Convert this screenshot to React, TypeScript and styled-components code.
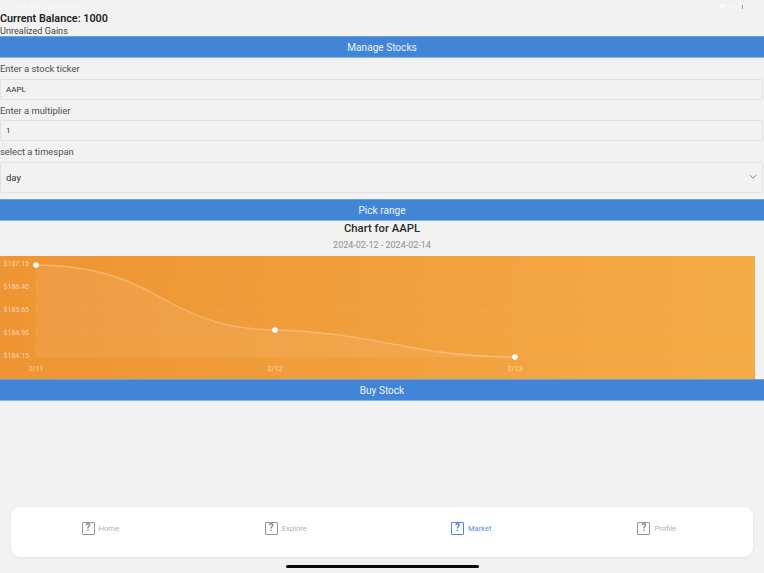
import React from 'react';
import styled, {createGlobalStyle} from 'styled-components';

const GlobalStyle = createGlobalStyle`
  html, body {
    margin: 0;
    padding: 0;
    background: #f2f2f2;
    font-family: Roboto, "Liberation Sans", sans-serif;
  }
  * {
    box-sizing: border-box;
  }
`;

const Page = styled.div`
  width: 764px;
  height: 573px;
  overflow: hidden;
  display: flex;
  flex-direction: column;
  background: #f2f2f2;
`;

const StatusBar = styled.div`
  height: 13px;
  flex-shrink: 0;
  padding: 1px 21px 0 10px;
  display: flex;
  justify-content: space-between;
  align-items: center;
  color: #ffffff;
  font-size: 7px;
  opacity: 0.7;
`;

const StatusIcons = styled.div`
  display: flex;
  align-items: center;
  gap: 3px;
`;

const BatteryLevel = styled.span`
  width: 1px;
  height: 4px;
  margin-left: 1px;
  background: #d9473f;
`;

const Main = styled.main`
  flex: 1;
  display: flex;
  flex-direction: column;
`;

const Balance = styled.div`
  height: 12px;
  font-size: 10.8px;
  line-height: 12px;
  font-weight: 600;
  color: #222222;
`;

const Gains = styled.div`
  height: 11px;
  font-size: 9.1px;
  line-height: 12px;
  color: #444444;
`;

const BlueButton = styled.button<{$top?: number}>`
  display: block;
  width: 100%;
  height: 22px;
  flex-shrink: 0;
  margin-top: ${(p) => p.$top || 0}px;
  border: 0;
  border-top: 1px solid #64a4e6;
  border-bottom: 1px solid #8db5e4;
  background: #4285d6;
  color: #eaf3fd;
  font-family: inherit;
  font-size: 10.1px;
  padding: 0;
`;

const FieldLabel = styled.label`
  display: block;
  height: 20.5px;
  padding-top: 5px;
  font-size: 9.4px;
  line-height: 12px;
  color: #505050;
`;

const Field = styled.div<{$tall?: boolean}>`
  height: ${(p) => (p.$tall ? 31.5 : 21)}px;
  margin-right: 1px;
  padding: 0 5px;
  display: flex;
  align-items: center;
  justify-content: space-between;
  border: 1px solid #e2e2e2;
  border-radius: 2px;
  background: #f2f2f2;
  color: #333333;
  font-size: ${(p) => (p.$tall ? 9.5 : 8)}px;
`;

const ChartTitle = styled.div`
  height: 16px;
  text-align: center;
  font-size: 11.3px;
  line-height: 15px;
  font-weight: 500;
  color: #2a2a2a;
`;

const ChartRange = styled.div`
  height: 19px;
  padding-top: 2px;
  text-align: center;
  font-size: 9px;
  line-height: 12px;
  color: #909090;
`;

const ChartBox = styled.div`
  height: 123px;
  flex-shrink: 0;
  svg {
    display: block;
  }
`;

const TabBar = styled.nav`
  height: 50px;
  flex-shrink: 0;
  margin: 0 11px;
  padding-bottom: 8px;
  display: grid;
  grid-template-columns: repeat(4, 1fr);
  background: #ffffff;
  border-radius: 9px;
  box-shadow: 0 1px 3px rgba(0, 0, 0, 0.08);
`;

const Tab = styled.div<{$active?: boolean}>`
  display: flex;
  align-items: center;
  justify-content: center;
  gap: 4px;
  padding-right: 7px;
  color: ${(p) => (p.$active ? '#5b90e6' : '#b0b0b0')};
  font-size: 7.6px;
`;

const MissingIcon = styled.span<{$active?: boolean}>`
  width: 13px;
  height: 13px;
  display: flex;
  align-items: center;
  justify-content: center;
  border: 1.3px solid ${(p) => (p.$active ? '#4a86e4' : '#969696')};
  border-radius: 1px;
  color: ${(p) => (p.$active ? '#4a86e4' : '#868686')};
  font-size: 10px;
  font-weight: 700;
  line-height: 1;
`;

const HomeBar = styled.div`
  width: 193px;
  height: 3px;
  flex-shrink: 0;
  margin: 8px auto 5px;
  background: #0a0a0a;
  border-radius: 2px;
`;

const yLabels = [
  {text: '$187.15', y: 266},
  {text: '$186.40', y: 289},
  {text: '$185.65', y: 312},
  {text: '$184.90', y: 335},
  {text: '$184.15', y: 358},
];

const points = [
  {label: '2/11', x: 36, y: 265},
  {label: '2/12', x: 275, y: 330},
  {label: '2/13', x: 515, y: 357},
];

// chart coordinates are shifted up so they read as page pixels
const curve =
  'M36 265 C80 265 118 273 160 297 C205 323 235 329 275 330 C340 331 390 345 440 352 C470 356 495 357 515 357';

const PriceChart = () => (
  <svg width="755" height="123" viewBox="0 256 755 123">
    <defs>
      <linearGradient id="bg" x1="0" x2="1" y1="0" y2="0">
        <stop offset="0" stopColor="#ee9433" />
        <stop offset="1" stopColor="#f4ab46" />
      </linearGradient>
    </defs>
    <rect x="0" y="256" width="755" height="123" fill="url(#bg)" />
    <path d={`${curve} L515 357 L36 357 Z`} fill="#ffffff" fillOpacity="0.07" />
    {[288, 311, 334, 357].map((y) => (
      <line key={y} x1="36" x2="755" y1={y} y2={y} stroke="#ffffff" strokeOpacity="0.1" strokeWidth="1" strokeDasharray="2 3" />
    ))}
    {[36, 275, 515].map((x) => (
      <line key={x} x1={x} x2={x} y1="265" y2="357" stroke="#ffffff" strokeOpacity="0.09" strokeWidth="1" strokeDasharray="2 3" />
    ))}
    <path d={curve} fill="none" stroke="#ffffff" strokeOpacity="0.28" strokeWidth="1.3" />
    {points.map((pt) => (
      <circle key={pt.label} cx={pt.x} cy={pt.y} r="2.8" fill="#ffffff" />
    ))}
    {yLabels.map((l) => (
      <text key={l.text} x="29" y={l.y} textAnchor="end" fontSize="7" fill="#ffffff" fillOpacity="0.65">
        {l.text}
      </text>
    ))}
    {points.map((pt) => (
      <text key={pt.label} x={pt.x} y="371" textAnchor="middle" fontSize="7.2" fill="#ffffff" fillOpacity="0.65">
        {pt.label}
      </text>
    ))}
  </svg>
);

const Chevron = () => (
  <svg width="8" height="6" viewBox="0 0 8 6">
    <path d="M1 1.2 L4 4.2 L7 1.2" fill="none" stroke="#7c7c7c" strokeWidth="1" />
  </svg>
);

const Wifi = () => (
  <svg width="7" height="6" viewBox="0 0 7 6">
    <path d="M0 1.6 C2 -0.4 5 -0.4 7 1.6 L3.5 6 Z" fill="#ffffff" />
  </svg>
);

const tabs = ['Home', 'Explore', 'Market', 'Profile'];

export default function App() {
  return (
    <Page>
      <GlobalStyle />
      <StatusBar>
        <span>11:41 AM&nbsp;&nbsp;Sun Feb 18</span>
        <StatusIcons>
          <Wifi />
          <span>1%</span>
          <BatteryLevel />
        </StatusIcons>
      </StatusBar>
      <Main>
        <Balance>Current Balance: 1000</Balance>
        <Gains>Unrealized Gains</Gains>
        <BlueButton>Manage Stocks</BlueButton>
        <FieldLabel>Enter a stock ticker</FieldLabel>
        <Field>AAPL</Field>
        <FieldLabel>Enter a multiplier</FieldLabel>
        <Field>1</Field>
        <FieldLabel>select a timespan</FieldLabel>
        <Field $tall>
          day
          <Chevron />
        </Field>
        <BlueButton $top={6}>Pick range</BlueButton>
        <ChartTitle>Chart for AAPL</ChartTitle>
        <ChartRange>2024-02-12 - 2024-02-14</ChartRange>
        <ChartBox>
          <PriceChart />
        </ChartBox>
        <BlueButton>Buy Stock</BlueButton>
      </Main>
      <TabBar>
        {tabs.map((name) => (
          <Tab key={name} $active={name === 'Market'}>
            <MissingIcon $active={name === 'Market'}>?</MissingIcon>
            {name}
          </Tab>
        ))}
      </TabBar>
      <HomeBar />
    </Page>
  );
}
